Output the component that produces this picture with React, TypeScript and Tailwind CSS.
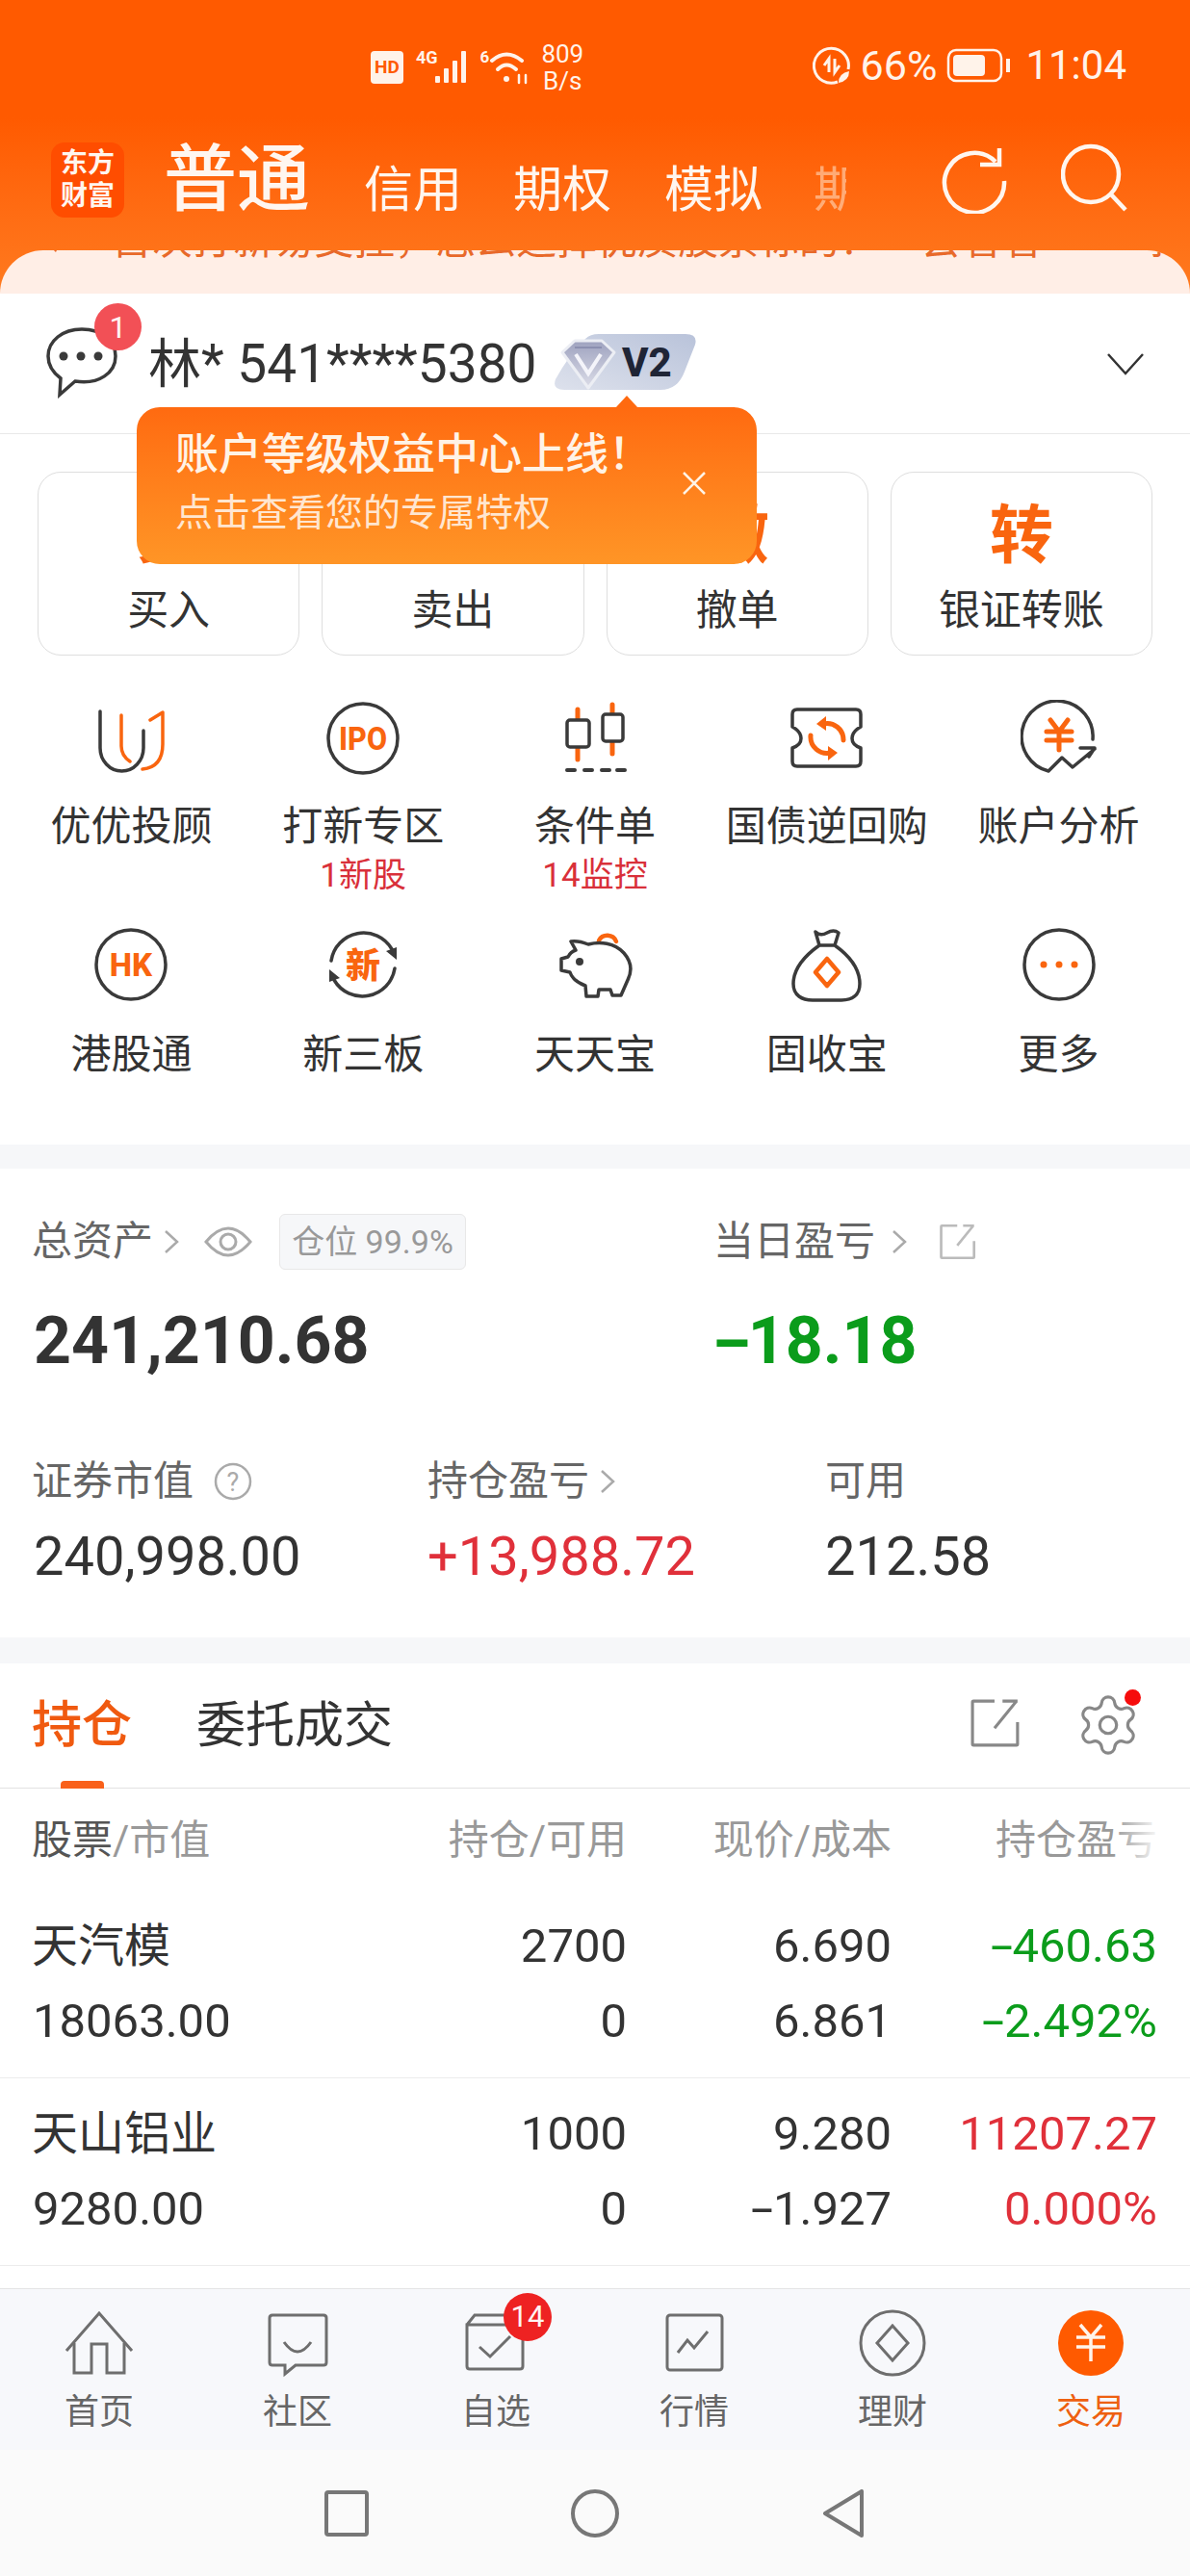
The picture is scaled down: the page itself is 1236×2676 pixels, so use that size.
import React from 'react'
import { Settings } from 'lucide-react'

const DARK = '#3a3a3a'
const ORANGE = '#f9650f'

function Chevron({ className = '' }: { className?: string }) {
  return (
    <svg viewBox="0 0 18 30" className={className} fill="none" stroke="#aaa" strokeWidth="2.5">
      <path d="M3 4 L15 15 L3 26" />
    </svg>
  )
}

function ExportIcon({ size, color, width }: { size: number; color: string; width: number }) {
  return (
    <svg viewBox="0 0 50 50" width={size} height={size} fill="none" stroke={color} strokeWidth={width}>
      <path d="M24 3 H3 Q2 3 2 4 V46 Q2 47 3 47 H46 Q47 47 47 46 V24" />
      <path d="M24 30 L46 3 M32 3 H47 V3" />
    </svg>
  )
}

// the reference's minus sign is longer than Roboto's hyphen
function Num({ value, gap = 'mr-[9px]' }: { value: string; gap?: string }) {
  if (!value.startsWith('-')) return <>{value}</>
  return (
    <>
      <span className={`inline-block origin-left scale-x-[1.7] ${gap}`}>-</span>
      {value.slice(1)}
    </>
  )
}

function StatusBar() {
  return (
    <div className="flex h-[140px] items-start pl-[385px] pr-[66px] pt-[45px] text-[#fff3ea]">
      <div className="mt-[8px] flex h-[34px] w-[34px] items-center justify-center rounded-[4px] bg-[#fff3ea] text-[19px] font-bold text-[#ff5a00]">
        HD
      </div>
      <span className="ml-[13px] mt-[5px] text-[18px] font-bold leading-[20px]">4G</span>
      <svg viewBox="0 0 40 38" className="-ml-[4px] mt-[5px] h-[38px] w-[40px]" fill="#fff3ea">
        <rect x="1" y="29" width="5" height="7" rx="1" />
        <rect x="10" y="21" width="5" height="15" rx="1" />
        <rect x="19" y="13" width="5" height="23" rx="1" />
        <rect x="28" y="3" width="5" height="33" rx="1" />
      </svg>
      <span className="ml-[8px] mt-[4px] text-[17px] font-bold leading-[20px]">6</span>
      <svg viewBox="0 0 44 40" className="mt-[5px] h-[40px] w-[44px]" fill="none" stroke="#fff3ea" strokeWidth="4" strokeLinecap="round">
        <path d="M3 13 Q18 0 34 13" />
        <path d="M9 22 Q18 13 28 22" />
        <circle cx="18" cy="32" r="3" fill="#fff3ea" stroke="none" />
        <path d="M31 28 V36 M38 28 V36" strokeWidth="2.5" />
      </svg>
      <div className="ml-[10px] mt-[-3px] flex flex-col items-center text-[26px] leading-[28px]">
        <span>809</span>
        <span>B/s</span>
      </div>
      <div className="ml-auto mt-[1px] flex items-center">
        <svg viewBox="0 0 40 40" className="h-[40px] w-[40px]" fill="none" stroke="#fff3ea" strokeWidth="3">
          <path d="M26 37 A18 18 0 1 1 37 24" />
          <path d="M12 20 L17 13 V27 M23 13 V27 L28 20" strokeWidth="3" />
          <path d="M27 38 Q27 28 38 26 Q38 36 27 38 Z" fill="#fff3ea" stroke="none" />
        </svg>
        <span className="ml-[10px] text-[43px] leading-[44px]">66%</span>
        <svg viewBox="0 0 68 36" className="ml-[10px] h-[36px] w-[68px]" fill="none" stroke="#fff3ea" strokeWidth="2.5">
          <rect x="2" y="2" width="55" height="32" rx="8" />
          <rect x="7" y="7" width="33" height="22" rx="4" fill="#fff3ea" stroke="none" />
          <rect x="62" y="11" width="4" height="14" fill="#fff3ea" stroke="none" />
        </svg>
        <span className="ml-[14px] text-[42px] leading-[44px]">11:04</span>
      </div>
    </div>
  )
}

function TopTabs() {
  return (
    <div className="flex h-[90px] items-end pl-[53px] text-[#fff6ef]">
      <div className="mb-[4px] flex h-[78px] w-[76px] flex-col items-center justify-center rounded-[14px] bg-[#ff4d00] text-[28px] font-bold leading-[34px]">
        <span>东方</span>
        <span>财富</span>
      </div>
      <span className="ml-[41px] text-[76px] font-medium leading-[86px]">普通</span>
      <span className="mb-[2px] ml-[56px] text-[51px] leading-[60px]">信用</span>
      <span className="mb-[2px] ml-[53px] text-[51px] leading-[60px]">期权</span>
      <span className="mb-[2px] ml-[55px] text-[51px] leading-[60px]">模拟</span>
      <span className="mb-[2px] ml-[53px] w-[34px] overflow-hidden whitespace-nowrap text-[51px] leading-[60px] text-[#ffd9bd]/60">期</span>
      <svg viewBox="0 0 70 70" className="mb-[8px] ml-[99px] h-[70px] w-[70px]" fill="none" stroke="#fff6ef" strokeWidth="4.5">
        <path d="M56 16 A31 31 0 1 0 65 36" />
        <path d="M40 19 H60 V2" />
      </svg>
      <svg viewBox="0 0 70 72" className="mb-[9px] ml-[54px] h-[72px] w-[70px]" fill="none" stroke="#fff6ef" strokeWidth="4.5">
        <circle cx="31" cy="32" r="29" />
        <path d="M52 53 L67 69" />
      </svg>
    </div>
  )
}

function Ticker() {
  return (
    <div className="mt-[30px] h-[45px] overflow-hidden rounded-t-[48px] bg-[#ffeee6]">
      <div className="-mt-[28px] flex whitespace-nowrap pl-[46px] text-[42px] leading-[36px] text-[#e8692a]">
        <svg viewBox="0 0 40 36" className="h-[36px] w-[40px]" fill="none" stroke="#e8692a" strokeWidth="3">
          <path d="M2 18 L18 34 L22 26 M30 18 L24 33" />
        </svg>
        <span className="ml-[44px]">首次打新易受挫，怎么选择优质股票标的？一会看看&gt;</span>
        <span className="ml-[90px]">打</span>
      </div>
    </div>
  )
}

function AccountRow() {
  return (
    <div className="relative flex h-[146px] items-center border-b border-[#e9e9e9] bg-white pl-[48px] pr-[48px]">
      <svg viewBox="0 0 74 74" className="mt-[-2px] h-[74px] w-[74px]" fill="none" stroke={DARK} strokeWidth="3.5">
        <path d="M37 2 C58 2 72 14 72 30 C72 47 55 60 30 56 L14 70 L15 53 C7 47 2 39 2 30 C2 14 17 2 37 2 Z" />
        <circle cx="18" cy="30" r="4.5" fill={DARK} stroke="none" />
        <circle cx="36" cy="30" r="4.5" fill={DARK} stroke="none" />
        <circle cx="54" cy="30" r="4.5" fill={DARK} stroke="none" />
      </svg>
      <span className="absolute left-[98px] top-[10px] flex h-[49px] w-[49px] items-center justify-center rounded-full bg-[#f25056] text-[32px] leading-none text-[#fff3f3]">
        1
      </span>
      <span className="ml-[32px] text-[55px] leading-[60px] text-[#333]">林* 541****5380</span>
      <svg viewBox="0 0 150 60" className="ml-[17px] mt-[-4px] h-[60px] w-[150px]">
        <defs>
          <linearGradient id="badge" x1="0" y1="1" x2="1" y2="0">
            <stop offset="0" stopColor="#dde1ec" />
            <stop offset="1" stopColor="#b9c3da" />
          </linearGradient>
          <linearGradient id="gem" x1="0" y1="0" x2="0" y2="1">
            <stop offset="0" stopColor="#9ea2bf" />
            <stop offset="1" stopColor="#dcdde8" />
          </linearGradient>
        </defs>
        <path d="M34 6 Q39 1 48 1 H138 Q151 1 148 12 L137 40 Q130 59 112 59 H12 Q-1 59 3 48 Q16 24 34 6 Z" fill="url(#badge)" />
        <path d="M10 20 L23 8 H51 L64 20 L37 57 Z" fill="url(#gem)" stroke="#eceef4" strokeWidth="3" strokeLinejoin="round" />
        <path d="M24 22 L37 42 L50 22" fill="none" stroke="#f4f4fa" strokeWidth="4" />
        <path d="M23 15 H51" stroke="#8b8fb0" strokeWidth="2" />
        <text x="72" y="45" fontSize="42" fontWeight="800" fill="#1f2536" fontFamily="Roboto, sans-serif">V2</text>
      </svg>
      <svg viewBox="0 0 40 24" className="ml-auto mr-[-1px] h-[24px] w-[40px]" fill="none" stroke="#333" strokeWidth="2.5">
        <path d="M2 2 L20 22 L38 2" />
      </svg>
    </div>
  )
}

function Tooltip() {
  return (
    <div className="absolute left-[142px] top-[423px] z-10 h-[163px] w-[644px] rounded-[24px] bg-gradient-to-b from-[#ff6a10] to-[#ff9526] pl-[40px] pt-[24px] text-[#fff3e6]">
      <div className="absolute left-[497px] top-[-12px] h-0 w-0 border-x-[12px] border-b-[13px] border-x-transparent border-b-[#ff6a10]" />
      <div className="text-[45px] font-medium leading-[52px]">账户等级权益中心上线！</div>
      <div className="mt-[10px] text-[39px] leading-[48px] text-[#ffe6d0]">点击查看您的专属特权</div>
      <svg viewBox="0 0 26 26" className="absolute left-[566px] top-[66px] h-[26px] w-[26px]" fill="none" stroke="#fff3e6" strokeWidth="2.5">
        <path d="M2 2 L24 24 M24 2 L2 24" />
      </svg>
    </div>
  )
}

const actions = [
  { icon: '买', label: '买入' },
  { icon: '卖', label: '卖出' },
  { icon: '撤', label: '撤单' },
  { icon: '转', label: '银证转账' },
]

function ActionButtons() {
  return (
    <div className="grid grid-cols-4 gap-[23px] px-[39px] pt-[39px]">
      {actions.map((a) => (
        <div key={a.label} className="flex h-[191px] flex-col items-center rounded-[24px] border border-[#dedede] pt-[27px]">
          <span className="text-[66px] font-bold leading-[78px] text-[#f9650f]">{a.icon}</span>
          <span className="mt-[13px] text-[43px] leading-[50px] text-[#333]">{a.label}</span>
        </div>
      ))}
    </div>
  )
}

const ic = { fill: 'none', stroke: DARK, strokeWidth: 3.5, strokeLinecap: 'round', strokeLinejoin: 'round' } as const
const oc = { fill: 'none', stroke: ORANGE, strokeWidth: 3.5, strokeLinecap: 'round', strokeLinejoin: 'round' } as const

const gridIcons: Record<string, React.ReactNode> = {
  youyou: (
    <>
      <path {...ic} d="M8 12 V50 A22.5 24 0 0 0 53 50 V32" />
      <path {...oc} d="M30 16 V48 Q30 58 39 64" />
      <path {...oc} d="M60 21 L73 13 V46 Q73 70 52 72" />
    </>
  ),
  ipo: (
    <>
      <circle {...ic} cx="40" cy="40" r="36" />
      <text x="40" y="52" textAnchor="middle" fontSize="34" fontWeight="800" fill={ORANGE} fontFamily="Roboto, sans-serif" textLength="50" lengthAdjust="spacingAndGlyphs">IPO</text>
    </>
  ),
  candle: (
    <>
      <path {...oc} d="M22 10 V62 M58 5 V56" strokeWidth="5" />
      <rect {...ic} x="11" y="21" width="23" height="28" rx="3" fill="#fff" />
      <rect {...ic} x="48" y="15" width="21" height="28" rx="3" fill="#fff" />
      <path {...ic} d="M11 73 H19 M29 73 H37 M47 73 H55 M63 73 H71" strokeWidth="4" />
    </>
  ),
  ticket: (
    <>
      <path {...ic} d="M9 10 H70 Q75 10 75 15 V28 Q66 33 66 40 Q66 47 75 50 V64 Q75 69 70 69 H9 Q4 69 4 64 V50 Q13 47 13 40 Q13 33 4 28 V15 Q4 10 9 10 Z" />
      <path {...oc} strokeWidth="5" d="M36 25 A17 17 0 0 1 57 42 M23 37 A17 17 0 0 0 44 55" />
      <path d="M39 17 L29 25 L39 32 Z M41 48 L51 55 L41 63 Z" fill={ORANGE} />
    </>
  ),
  yen: (
    <>
      <path {...ic} d="M75 41 A37 37 0 1 0 29 74 L43 60 L54 70 L77 51 M62 50 H77 L71 59" />
      <path {...oc} strokeWidth="5" d="M31 21 L40 33 L49 21 M27 33 H53 M27 42 H53 M40 33 V52" />
    </>
  ),
  hk: (
    <>
      <circle {...ic} cx="40" cy="38" r="36" />
      <text x="40" y="50" textAnchor="middle" fontSize="33" fontWeight="800" fill={ORANGE} fontFamily="Roboto, sans-serif">HK</text>
    </>
  ),
  xin: (
    <>
      <path {...ic} d="M7 34 A34 34 0 0 1 70 22 M73 42 A34 34 0 0 1 10 54" />
      <path d="M64 24 L75 20 L75 33 Z M16 52 L5 56 L5 43 Z" fill={DARK} />
      <text x="40" y="52" textAnchor="middle" fontSize="36" fontWeight="800" fill={ORANGE} fontFamily="'Noto Sans CJK SC', sans-serif">新</text>
    </>
  ),
  pig: (
    <>
      <path {...oc} strokeWidth="4.5" d="M44 13 A10 10 0 0 1 62 14" />
      <path {...ic} d="M15 14 C22 13 28 15 33 17 C45 14 60 15 70 26 C77 34 79 44 74 54 L67 70 H58 L56 64 H44 L43 71 H31 L30 60 C22 57 16 52 14 46 L5 44 V32 L12 30 C14 26 17 24 20 23 Z" />
      <circle cx="24" cy="35" r="4" fill={DARK} />
    </>
  ),
  bag: (
    <>
      <path {...ic} d="M28 4 Q33 9 40 5 Q47 1 52 5 L48 18 C62 28 74 42 74 58 C74 70 66 75 55 75 H25 C14 75 5 70 5 58 C5 42 18 28 32 18 Z M32 18 H48" />
      <path {...oc} strokeWidth="4.5" d="M40 32 L52 46 L40 60 L28 46 Z" />
    </>
  ),
  more: (
    <>
      <circle {...ic} cx="40" cy="38" r="36" />
      <circle cx="24" cy="38" r="3.5" fill={ORANGE} />
      <circle cx="40" cy="38" r="3.5" fill={ORANGE} />
      <circle cx="56" cy="38" r="3.5" fill={ORANGE} />
    </>
  ),
}

const gridItems = [
  { icon: 'youyou', label: '优优投顾' },
  { icon: 'ipo', label: '打新专区', sub: '1新股' },
  { icon: 'candle', label: '条件单', sub: '14监控' },
  { icon: 'ticket', label: '国债逆回购' },
  { icon: 'yen', label: '账户分析' },
  { icon: 'hk', label: '港股通' },
  { icon: 'xin', label: '新三板' },
  { icon: 'pig', label: '天天宝' },
  { icon: 'bag', label: '固收宝' },
  { icon: 'more', label: '更多' },
]

function ToolGrid() {
  return (
    <div className="grid h-[508px] grid-cols-5 content-start px-[16px] pt-[46px]">
      {gridItems.map((g) => (
        <div key={g.label} className="flex h-[237px] flex-col items-center">
          <svg viewBox="0 0 80 80" className="h-[80px] w-[80px]">
            {gridIcons[g.icon]}
          </svg>
          <span className="mt-[28px] whitespace-nowrap text-[42px] leading-[48px] text-[#333]">{g.label}</span>
          {g.sub && <span className="mt-[7px] text-[35px] leading-[40px] text-[#d9303a]">{g.sub}</span>}
        </div>
      ))}
    </div>
  )
}

function Assets() {
  return (
    <div className="h-[487px] bg-white px-[33px] pt-[52px]">
      <div className="flex h-[48px] items-center text-[42px] leading-[48px] text-[#666]">
        <div className="flex w-[708px] items-center">
          <span>总资产</span>
          <Chevron className="ml-[10px] h-[30px] w-[18px]" />
          <svg viewBox="0 0 50 40" className="ml-[25px] h-[40px] w-[50px]" fill="none" stroke="#aaa" strokeWidth="3">
            <path d="M2 20 Q25 -8 48 20 Q25 48 2 20 Z" />
            <circle cx="25" cy="20" r="8" />
          </svg>
          <div className="ml-[28px] flex h-[58px] w-[194px] items-center justify-center rounded-[6px] border border-[#e8e8e8] bg-[#f6f7f9] text-[34px] text-[#999]">
            仓位 99.9%
          </div>
        </div>
        <span>当日盈亏</span>
        <Chevron className="ml-[16px] h-[30px] w-[18px]" />
        <div className="ml-[33px]">
          <ExportIcon size={38} color="#bbb" width={3.5} />
        </div>
      </div>
      <div className="mt-[39px] flex pl-[2px] text-[68px] font-bold leading-[80px]">
        <span className="w-[703px] text-[#333]">241,210.68</span>
        <span className="text-[#0b9c1b]">
          <Num value="-18.18" gap="mr-[12px]" />
        </span>
      </div>
      <div className="mt-[82px] flex h-[48px] items-center text-[42px] leading-[48px] text-[#666]">
        <div className="flex w-[411px] items-center">
          <span>证券市值</span>
          <svg viewBox="0 0 40 40" className="ml-[21px] h-[40px] w-[40px]">
            <circle cx="20" cy="20" r="18" fill="none" stroke="#aaa" strokeWidth="2.5" />
            <text x="20" y="30" textAnchor="middle" fontSize="27" fill="#aaa" fontFamily="Roboto, sans-serif">?</text>
          </svg>
        </div>
        <div className="flex w-[413px] items-center">
          <span>持仓盈亏</span>
          <Chevron className="ml-[10px] h-[30px] w-[18px]" />
        </div>
        <span>可用</span>
      </div>
      <div className="mt-[22px] flex pl-[2px] text-[56px] leading-[64px]">
        <span className="w-[409px] text-[#333]">240,998.00</span>
        <span className="w-[413px] text-[#e0303a]">+13,988.72</span>
        <span className="text-[#333]">212.58</span>
      </div>
    </div>
  )
}

function PositionTabs() {
  return (
    <div className="relative flex h-[130px] items-center border-b border-[#e2e2e2] bg-white pl-[33px] pr-[35px]">
      <span className="text-[52px] font-medium leading-[60px] text-[#f05a10]">持仓</span>
      <span className="ml-[67px] text-[51px] leading-[60px] text-[#333]">委托成交</span>
      <div className="ml-auto mr-[6px] mt-[-6px]">
        <ExportIcon size={52} color="#888" width={3} />
      </div>
      <div className="relative ml-[50px] mr-[15px] mt-[-2px]">
        <Settings size={70} strokeWidth={1.1} color="#888" />
        <span className="absolute right-[1px] top-[-2px] h-[17px] w-[17px] rounded-full bg-[#f60c0c]" />
      </div>
      <span className="absolute bottom-[-1px] left-[63px] h-[8px] w-[45px] rounded-t-[4px] bg-[#f9601a]" />
    </div>
  )
}

const rows = [
  {
    name: '天汽模', cap: '18063.00', qty: '2700', avail: '0', price: '6.690', cost: '6.861',
    pnl: '-460.63', pct: '-2.492%', color: 'text-[#0b9c1b]',
  },
  {
    name: '天山铝业', cap: '9280.00', qty: '1000', avail: '0', price: '9.280', cost: '-1.927',
    pnl: '11207.27', pct: '0.000%', color: 'text-[#e0303a]',
  },
]

function Holdings() {
  return (
    <div className="bg-white">
      <div className="relative flex h-[106px] items-center pl-[33px] text-[42px] text-[#999]">
        <span className="w-[302px]">
          <span className="text-[#555]">股票</span>/市值
        </span>
        <span className="w-[316px] text-right">持仓/可用</span>
        <span className="w-[275px] text-right">现价/成本</span>
        <span className="w-[276px] text-right">持仓盈亏</span>
        <div className="absolute right-[30px] top-0 h-full w-[50px] bg-gradient-to-r from-white/0 to-white" />
      </div>
      {rows.map((r) => (
        <div key={r.name} className="border-b border-[#ececec] py-[19px] pl-[33px] text-[49px] leading-[78px] text-[#333]">
          <div className="flex">
            <span className="w-[302px] text-[48px]">{r.name}</span>
            <span className="w-[316px] text-right">{r.qty}</span>
            <span className="w-[275px] text-right">{r.price}</span>
            <span className={`w-[276px] text-right ${r.color}`}>
              <Num value={r.pnl} />
            </span>
          </div>
          <div className="flex">
            <span className="w-[302px] pl-[1px]">{r.cap}</span>
            <span className="w-[316px] text-right">{r.avail}</span>
            <span className="w-[275px] text-right">
              <Num value={r.cost} />
            </span>
            <span className={`w-[276px] text-right ${r.color}`}>
              <Num value={r.pct} />
            </span>
          </div>
        </div>
      ))}
    </div>
  )
}

const nc = { fill: 'none', stroke: '#6e6e6e', strokeWidth: 3 } as const

const navItems: { label: string; active?: boolean; badge?: string; icon: React.ReactNode }[] = [
  {
    label: '首页',
    icon: (
      <>
        <path {...nc} d="M6 44 L40 5 L74 44" />
        <path {...nc} d="M14 36 V67 H32 V37 H48 V67 H66 V36" />
      </>
    ),
  },
  {
    label: '社区',
    icon: (
      <>
        <path {...nc} d="M14 7 H67 Q70 7 70 10 V56 Q70 59 67 59 H38 L27 68 V59 H14 Q11 59 11 56 V10 Q11 7 14 7 Z" />
        <path {...nc} d="M26 35 Q40 55 54 35" />
      </>
    ),
  },
  {
    label: '自选',
    badge: '14',
    icon: (
      <>
        <path {...nc} d="M10 17 L18 7 H60 M10 17 H68 V60 Q68 63 65 63 H13 Q10 63 10 60 Z" />
        <path {...nc} d="M23 40 L34 50 L55 29" />
      </>
    ),
  },
  {
    label: '行情',
    icon: (
      <>
        <rect {...nc} x="12" y="7" width="57" height="57" rx="3" />
        <path {...nc} d="M23 46 L33 33 L40 41 L54 24" />
      </>
    ),
  },
  {
    label: '理财',
    icon: (
      <>
        <circle {...nc} cx="40" cy="36" r="33" />
        <path {...nc} d="M40 18 L56 36 L40 54 L24 36 Z" />
      </>
    ),
  },
  {
    label: '交易',
    active: true,
    icon: (
      <>
        <circle cx="40" cy="36" r="34" fill="#ff5a00" />
        <path d="M29 17 L40 30 L51 17 M25 30 H55 M25 40 H55 M40 30 V55" fill="none" stroke="#fff3ea" strokeWidth="3.5" />
      </>
    ),
  },
]

function BottomNav() {
  return (
    <div className="grid h-[168px] grid-cols-6 border-t border-[#e4e4e4] bg-[#f7f8fb] pt-[20px]">
      {navItems.map((n) => (
        <div key={n.label} className="relative flex flex-col items-center">
          <svg viewBox="0 0 80 80" className="h-[80px] w-[80px]">
            {n.icon}
          </svg>
          {n.badge && (
            <span className="absolute left-[111px] top-[-16px] flex h-[50px] w-[50px] items-center justify-center rounded-full bg-[#ee2222] text-[31px] text-[#fff3f3]">
              {n.badge}
            </span>
          )}
          <span className={`mt-[6px] text-[36px] leading-[44px] ${n.active ? 'text-[#ee6010]' : 'text-[#666]'}`}>{n.label}</span>
        </div>
      ))}
    </div>
  )
}

function SystemNav() {
  return (
    <div className="flex h-[131px] items-center gap-[208px] bg-[#fafafa] pl-[335px]">
      <svg viewBox="0 0 50 50" className="h-[50px] w-[50px]" fill="none" stroke="#777" strokeWidth="4">
        <rect x="4" y="3" width="42" height="44" rx="2" />
      </svg>
      <svg viewBox="0 0 50 50" className="h-[50px] w-[50px]" fill="none" stroke="#777" strokeWidth="4">
        <circle cx="25" cy="25" r="23" />
      </svg>
      <svg viewBox="0 0 50 50" className="h-[50px] w-[50px]" fill="none" stroke="#777" strokeWidth="4" strokeLinejoin="round">
        <path d="M44 2 V48 L6 25 Z" />
      </svg>
    </div>
  )
}

export default function App() {
  return (
    <div className="relative flex h-[2676px] w-[1236px] flex-col overflow-hidden bg-white font-['Roboto','Noto_Sans_CJK_SC',sans-serif]">
      <div className="h-[305px] bg-gradient-to-b from-[#ff5a00] from-40% to-[#ff7a1e]">
        <StatusBar />
        <TopTabs />
        <Ticker />
      </div>
      <AccountRow />
      <Tooltip />
      <ActionButtons />
      <ToolGrid />
      <div className="h-[25px] bg-[#f6f7f9]" />
      <Assets />
      <div className="h-[27px] bg-[#f6f7f9]" />
      <PositionTabs />
      <Holdings />
      <div className="flex-1 bg-white" />
      <BottomNav />
      <SystemNav />
    </div>
  )
}
